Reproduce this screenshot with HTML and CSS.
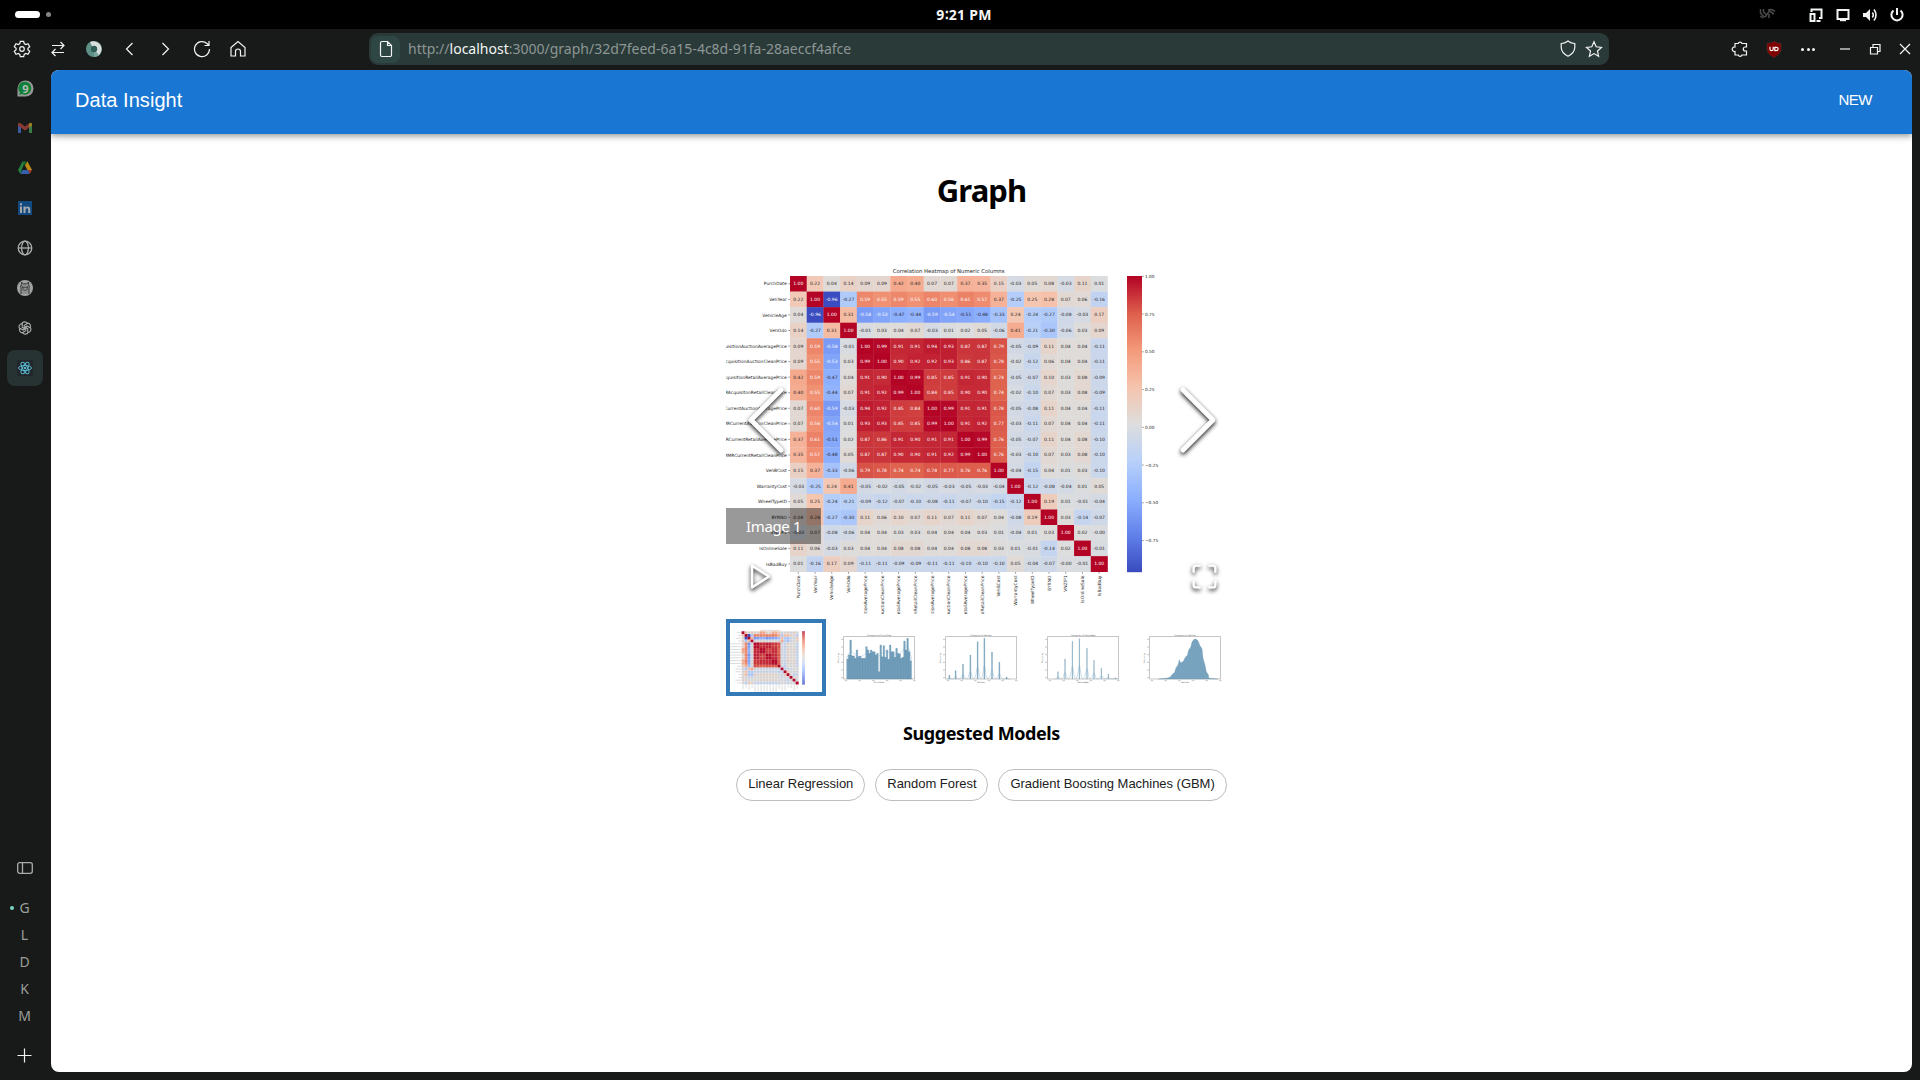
FILE: index.html
```html
<!DOCTYPE html>
<html lang="en">
<head>
<meta charset="utf-8">
<title>Data Insight</title>
<link rel="stylesheet" href="styles.css">
</head>
<body>
<div class="topbar">
  <div class="workspaces"><span class="ws-active"></span><span class="ws-dot"></span></div>
  <div class="clock">9∶21 PM</div>
  <div class="tray">
    <svg class="faint" width="17" height="17" viewBox="0 0 17 17"><path d="M1.500 3v4l4 4.500M4.500 3v3l3 3M6 11l6-8M9 4c3-1 5-.5 7 1.500M11 6q3 0 3.500 2.500M10 8v4M1 10l3 2" /></svg>
    <svg width="16" height="16" viewBox="0 0 16 16"><path d="M3.500 5V2.500h10V11H11"/><path d="M2.500 7h4v7h-4z"/><path d="M8.500 14h4"/></svg>
    <svg width="16" height="16" viewBox="0 0 16 16"><path d="M2.500 3h11v9h-11z"/><path d="M5 13.2h6" /></svg>
    <svg width="16" height="16" viewBox="0 0 16 16"><path class="solid" d="M1 6h3l4-4v12l-4-4H1z"/><path d="M10.300 5.500q2 2.500 0 5M12 2.500q4 5.500 0 11" stroke-width="1.600"/></svg>
    <svg width="16" height="16" viewBox="0 0 16 16"><path d="M8 1v7M4.500 3.500a5.600 5.600 0 1 0 7 0"/></svg>
  </div>
</div>

<div class="toolbar">
  <div class="tools">
    <span class="tool"><svg width="18" height="18" viewBox="0 0 18 18"><path d="M7.300 1.300h3.400l.5 2.300 1.500.9 2.300-.8 1.700 2.900-1.800 1.600v1.600l1.800 1.600-1.700 2.900-2.300-.8-1.500.9-.5 2.300H7.300l-.5-2.300-1.500-.9-2.300.8-1.700-2.900 1.800-1.600V8.200L1.300 6.600 3 3.700l2.300.8 1.500-.9z"/><circle cx="9" cy="9" r="2.300"/></svg></span>
    <span class="tool"><svg width="16" height="16" viewBox="0 0 16 16"><path d="M2 4.500h12M10.500 1l3.500 3.500L10.500 8M14 11.500H2M5.500 8L2 11.500 5.500 15"/></svg></span>
    <span class="tool"><svg class="plain" width="16" height="16" viewBox="0 0 16 16"><circle cx="8" cy="8" r="8" fill="#5f9087"/><path d="M4 1.100A8 8 0 0 1 12 14.900L9 10 6 5z" fill="#d9dfdd"/><path d="M8 8V16a8 8 0 0 0 5-2z" fill="#79a79e"/><circle cx="8" cy="8" r="3.200" fill="#2f5d57"/></svg></span>
    <span class="tool"><svg width="16" height="16" viewBox="0 0 16 16"><path d="M10.500 2l-6 6 6 6"/></svg></span>
    <span class="tool"><svg width="16" height="16" viewBox="0 0 16 16"><path d="M4.500 2l6 6-6 6"/></svg></span>
    <span class="tool"><svg width="18" height="18" viewBox="0 0 18 18"><path d="M16.500 9A7.500 7.500 0 1 1 14 3.500L16 5.500M16 1v4.500h-4.500"/></svg></span>
    <span class="tool"><svg width="18" height="18" viewBox="0 0 18 18"><path d="M2 7.500L9 1.500l7 6V16h-4.500v-4.500a2.500 2.500 0 0 0-5 0V16H2z"/></svg></span>
  </div>
  <div class="urlbar">
    <span class="site"><svg width="14" height="18" viewBox="0 0 14 18"><path d="M3 1.500h5.500l4 4V15a1.500 1.500 0 0 1-1.500 1.500H3A1.500 1.500 0 0 1 1.500 15V3A1.500 1.500 0 0 1 3 1.500zM8.500 1.500V5.500h4"/></svg></span>
    <span class="url">http://<b>localhost</b>:3000/graph/32d7feed-6a15-4c8d-91fa-28aeccf4afce</span>
    <span class="url-icons">
      <svg width="16" height="18" viewBox="0 0 16 18"><path d="M8 1q3 2.500 6.800 2.500V7.500Q14.500 13 8 16.300 1.500 13 1.200 7.500v-4Q5 3.500 8 1z"/></svg>
      <svg width="18" height="18" viewBox="0 0 18 18"><path d="M9 1.800l2.200 5 5.300.6-4 3.600 1.100 5.300L9 13.600l-4.600 2.700 1.100-5.300-4-3.600 5.300-.6z"/></svg>
    </span>
  </div>
  <div class="controls">
    <span class="ctl"><svg width="18" height="18" viewBox="0 0 18 18"><path d="M4 3.500h3.200a2 2 0 0 1 3.800 0h4.500V7h-1.200a2 2 0 0 0 0 4h1.200v4H11a2 2 0 0 1-3.800 0H4v-3.500a2.300 2.300 0 1 1 0-4.500z"/></svg></span>
    <span class="ctl"><svg class="plain" width="16" height="17" viewBox="0 0 16 17"><path d="M8 .5Q11 2.500 15 2.500v5.500q0 5-7 8.500Q1 13 1 8V2.500Q5 2.500 8 .5z" fill="#800000" stroke="#5d3030" stroke-width=".6"/><path d="M4 5.800v2.400q0 1.500 1.600 1.500t1.600-1.500V5.800M8.800 6.400v3.300h1.400q1.900-.1 1.900-1.800t-1.900-1.600z" fill="none" stroke="#fff" stroke-width="1.200"/></svg></span>
    <span class="ctl dots"><i></i><i></i><i></i></span>
    <span class="win"><svg width="12" height="12" viewBox="0 0 12 12"><path d="M1 6h10"/></svg></span>
    <span class="win"><svg width="12" height="12" viewBox="0 0 12 12"><path d="M1.500 4.500h7v6.500h-7zM4 4.500V1.500h7v7H8.500"/></svg></span>
    <span class="win"><svg width="12" height="12" viewBox="0 0 12 12"><path d="M1 1l10 10M11 1L1 11"/></svg></span>
  </div>
</div>

<div class="workarea">
  <nav class="sidebar">
    <span class="tab"><svg class="plain" width="17" height="17" viewBox="0 0 17 17"><path d="M.5 16.500V8.500a8 8 0 1 1 8 8z" fill="#999"/><path d="M2 15l1-2.500A6.500 6.500 0 1 1 5 14z" fill="#118038"/><text x="8.500" y="12.600" class="badge">9</text></svg></span>
    <span class="tab"><svg class="plain" width="16" height="16" viewBox="0 0 16 16"><path d="M1 4v9h3V7z" fill="#3a5a9c"/><path d="M12 7v6h3V4z" fill="#3c7a46"/><path d="M1 5V3.500Q2 2 4 3.500L8 6.500l4-3v4L8 10.500 1 5.500z" fill="#8a3932"/><path d="M12 3.500q2-1.500 3 0V5.500l-3 2z" fill="#a07f22"/></svg></span>
    <span class="tab"><svg class="plain" width="16" height="16" viewBox="0 0 16 16"><path d="M5.500 1.500h2.500l-2 5L3.300 14 1 10z" fill="#26803f"/><path d="M5.500 1.500h5L8 6z" fill="#1d6130"/><path d="M10.500 1.500L15 10h-4.500L8 5.500z" fill="#b98b15"/><path d="M3.300 14L5.500 10H11l1.700 4z" fill="#3561ad"/><path d="M11 10h4l-2.300 4z" fill="#a33a30"/></svg></span>
    <span class="tab"><svg class="plain" width="14" height="14" viewBox="0 0 14 14"><path d="M0 0h14v14H0z" fill="#124a80"/><path d="M2 5.500h2V12H2zM2 2.200h2v2H2zM5.500 5.500h2v1q2-2 4.200-.3.500.8.500 2V12h-2V8.700q-.1-1.500-1.300-1.400-1.300.1-1.400 1.500V12h-2z" fill="#a5a9ad"/></svg></span>
    <span class="tab"><svg class="grey" width="16" height="16" viewBox="0 0 16 16"><circle cx="8" cy="8" r="6.800"/><ellipse cx="8" cy="8" rx="3.400" ry="6.800"/><path d="M1.200 8h13.600"/></svg></span>
    <span class="tab"><svg class="plain" width="16" height="16" viewBox="0 0 16 16"><circle cx="8" cy="8" r="8" fill="#a2a2a2"/><path d="M4 14V8q-.8-2 .3-3.200L4.500 2l1.800 2q1.700-.6 3.400 0l1.800-2 .2 2.800Q12.800 6 12 8v6" fill="#8c8f8e" stroke="#363837" stroke-width="1"/><ellipse cx="8" cy="8.800" rx="2.200" ry="1.600" fill="none" stroke="#363837" stroke-width=".8"/><circle cx="5.700" cy="7" r=".7" fill="#222"/><circle cx="10.300" cy="7" r=".7" fill="#222"/></svg></span>
    <span class="tab"><svg class="grey" width="14" height="14" viewBox="0 0 14 14"><g stroke-width="1.100"><path id="knot" d="M3.700 3.200A3 3 0 0 1 9.300 2.500L6.200 4.300v3.200"/><use href="#knot" transform="rotate(60 7 7)"/><use href="#knot" transform="rotate(120 7 7)"/><use href="#knot" transform="rotate(180 7 7)"/><use href="#knot" transform="rotate(240 7 7)"/><use href="#knot" transform="rotate(300 7 7)"/></g></svg></span>
    <span class="tab current"><svg class="plain" width="16" height="16" viewBox="0 0 16 16"><rect width="16" height="16" rx="2" fill="#20262a"/><g fill="none" stroke="#58b7cf" stroke-width="1"><ellipse cx="8" cy="8" rx="6.500" ry="2.500"/><ellipse cx="8" cy="8" rx="6.500" ry="2.500" transform="rotate(60 8 8)"/><ellipse cx="8" cy="8" rx="6.500" ry="2.500" transform="rotate(120 8 8)"/></g><circle cx="8" cy="8" r="1.300" fill="#58b7cf"/></svg></span>
    <div class="sidebar-foot">
      <span class="panel-toggle"><svg class="grey" width="16" height="12" viewBox="0 0 16 12"><rect x=".7" y=".7" width="14.600" height="10.600" rx="2"/><path d="M5.500 1v10"/></svg></span>
      <span class="space space-on">G</span>
      <span class="space">L</span>
      <span class="space">D</span>
      <span class="space">K</span>
      <span class="space">M</span>
      <span class="add"><svg width="15" height="15" viewBox="0 0 15 15"><path d="M7.500 .5v14M.5 7.500h14"/></svg></span>
    </div>
  </nav>

  <div class="page">
    <header class="appbar"><span class="brand">Data Insight</span><span class="new">NEW</span></header>
    <main class="content">
      <h1>Graph</h1>
      <div class="stage">
        <svg id="heatmap" class="chart" width="511" height="384" viewBox="0 0 511 384"></svg>
        <svg class="nav nav-left" width="60" height="120" viewBox="6 0 12 24"><path d="M15 18l-6-6 6-6"/></svg>
        <svg class="nav nav-right" width="60" height="120" viewBox="6 0 12 24"><path d="M9 18l6-6-6-6"/></svg>
        <div class="caption">Image 1</div>
        <svg class="nav play" width="29" height="29" viewBox="0 0 24 24"><path d="M5 3l14 9-14 9z"/></svg>
        <svg class="nav full" width="29" height="29" viewBox="0 0 24 24"><path d="M8 3H5a2 2 0 0 0-2 2v3m18 0V5a2 2 0 0 0-2-2h-3m0 18h3a2 2 0 0 0 2-2v-3M3 16v3a2 2 0 0 0 2 2h3"/></svg>
      </div>
      <div class="thumbs">
        <div class="thumb selected"><svg id="thumb-heatmap" class="chart" width="92" height="69" viewBox="0 0 511 384"></svg></div>
        <div class="thumb"><svg id="hist-date" class="chart" width="92" height="69" viewBox="0 0 276 207"></svg></div>
        <div class="thumb"><svg id="hist-year" class="chart" width="92" height="69" viewBox="0 0 276 207"></svg></div>
        <div class="thumb"><svg id="hist-age" class="chart" width="92" height="69" viewBox="0 0 276 207"></svg></div>
        <div class="thumb"><svg id="hist-odo" class="chart" width="92" height="69" viewBox="0 0 276 207"></svg></div>
      </div>
      <h3>Suggested Models</h3>
      <div class="chips"><span class="chip">Linear Regression</span><span class="chip">Random Forest</span><span class="chip">Gradient Boosting Machines (GBM)</span></div>
    </main>
  </div>
</div>
<script src="charts.js"></script>
</body>
</html>
```
FILE: styles.css
```css
* { box-sizing: border-box; }
body { margin: 0; width: 1920px; height: 1080px; overflow: hidden; background: #181a19; font-family: "Noto Sans", sans-serif; display: flex; flex-direction: column; }
svg { display: block; fill: none; stroke: #f2f4f3; stroke-width: 1.2; flex: none; }
svg.plain, svg.chart { stroke: none; }
svg.grey { stroke: #aaacab; stroke-width: 1.3; }

.topbar { height: 29px; flex: none; background: #000; display: grid; grid-template-columns: 1fr auto 1fr; align-items: center; padding: 0 15px; }
.workspaces { display: flex; align-items: center; gap: 6px; }
.ws-active { width: 25px; height: 7px; border-radius: 4px; background: #fff; }
.ws-dot { width: 5px; height: 5px; border-radius: 50%; background: #858585; }
.clock { color: #f5f5f5; font-weight: 700; font-size: 14px; line-height: 28px; margin-left: 8px; letter-spacing: 0.25px; }
.tray { display: flex; justify-content: flex-end; align-items: center; gap: 11px; }
.tray svg { stroke-width: 2; }
.tray .solid { fill: #f2f4f3; stroke: none; }
.tray .faint { stroke: #4a4a4a; stroke-width: 1.5; margin-right: 21px; }

.toolbar { height: 41px; flex: none; display: flex; align-items: center; padding: 0 0 1px 4px; }
.tools, .controls { display: flex; align-items: center; }
.tool { width: 36px; height: 36px; display: grid; place-items: center; }
.urlbar { width: 1240px; height: 32px; margin-left: 113px; border-radius: 9px; background: #2a3a38; display: flex; align-items: center; padding: 0 6px 0 2px; }
.site { width: 29px; height: 27px; border-radius: 7px; background: #2e4744; display: grid; place-items: center; }
.url { margin-left: 8px; color: #8d9695; font-size: 14px; line-height: 20px; white-space: nowrap; padding-bottom: 1px; }
.url b { color: #f4f6f5; font-weight: 400; }
.url-icons { display: flex; gap: 9px; margin-left: auto; }
.controls { margin-left: auto; }
.ctl { width: 34px; height: 34px; display: grid; place-items: center; }
.ctl.dots { display: flex; align-items: center; justify-content: center; gap: 2.5px; margin-right: 5px; }
.dots i { width: 3px; height: 3px; border-radius: 50%; background: #f2f4f3; }
.win { width: 30px; height: 30px; display: grid; place-items: center; }

.workarea { flex: 1; min-height: 0; display: flex; padding: 0 8px 8px 0; }
.sidebar { width: 51px; flex: none; display: flex; flex-direction: column; gap: 4px; padding-left: 7px; }
.tab { width: 36px; height: 36px; flex: none; display: grid; place-items: center; border-radius: 8px; }
.tab.current { background: #263332; }
.badge { font: 700 11px "Noto Sans", sans-serif; fill: #b5bbb7; text-anchor: middle; }
.sidebar-foot { margin-top: auto; width: 36px; display: flex; flex-direction: column; align-items: center; color: #9b9d9c; font-size: 14px; }
.panel-toggle { height: 27px; margin-bottom: 13px; padding-bottom: 1px; display: grid; place-items: center; }
.space { position: relative; width: 36px; height: 27px; line-height: 26px; text-align: center; padding-right: 1px; }
.space-on::before { content: ""; position: absolute; left: 3px; top: 11px; width: 4px; height: 4px; border-radius: 50%; background: #78d5c4; }
.add { margin: 18px 1px 9px 0; }

.page { flex: 1; background: #fff; border-radius: 8px; overflow: hidden; display: flex; flex-direction: column; }
.appbar { height: 64px; flex: none; background: #1976d2; color: #fff; display: flex; align-items: center; justify-content: space-between; padding: 0 40px 4px 24px; font-family: "Liberation Sans", sans-serif; box-shadow: 0 2px 4px -1px rgba(0,0,0,.2), 0 4px 5px rgba(0,0,0,.14), 0 1px 10px rgba(0,0,0,.12); }
.brand { font-size: 20px; letter-spacing: .05px; }
.new { font-size: 15px; letter-spacing: -.5px; padding-bottom: 1px; }
.content { display: flex; flex-direction: column; align-items: center; }
h1 { margin: 34px 0 0; font-size: 31px; font-weight: 700; letter-spacing: -.9px; line-height: 44px; height: 62px; color: #000; }
.stage { position: relative; width: 511px; height: 384px; }
.nav { position: absolute; stroke: #fff; stroke-width: 1; stroke-linecap: round; stroke-linejoin: round; filter: drop-shadow(0 2px 2px #1a1a1a); }
.nav-left { left: 10px; top: 130px; }
.nav-right { right: 9px; top: 130px; }
.play { left: 20px; bottom: 23px; stroke-width: 2; }
.full { right: 18px; bottom: 23px; stroke-width: 2; }
.caption { position: absolute; left: 0; bottom: 70px; width: 95px; height: 36px; line-height: 36px; padding-left: 20px; background: rgba(0,0,0,.4); color: #fff; font-size: 15px; letter-spacing: -.35px; }
.thumbs { display: flex; gap: 2px; margin-top: 5px; width: 511px; }
.thumb { width: 100px; height: 77px; border: 4px solid transparent; }
.selected { border-color: #337ab7; }
h3 { margin: 24px 0 0; font-size: 18px; font-weight: 700; letter-spacing: -.42px; line-height: 26px; color: #000; }
.chips { display: flex; gap: 10px; margin-top: 23px; }
.chip { height: 32px; line-height: 28px; border: 1px solid #bdbdbd; border-radius: 16px; padding: 0 11px; font-family: "Liberation Sans", sans-serif; font-size: 13px; letter-spacing: -.03px; color: #212121; }

.chart text { font-family: "DejaVu Sans", sans-serif; fill: #262626; }
.chart .cell { font-size: 4.5px; text-anchor: middle; }
.chart .cell.light { fill: #fff; }
.chart .label { font-size: 4.45px; text-anchor: end; }
.chart .scale { font-size: 4.3px; }
.chart .title { font-size: 5.35px; text-anchor: middle; }
.chart .tick { stroke: #333; stroke-width: .5; }
.chart .axis { fill: none; stroke: #aaa; stroke-width: 2; }
.chart .bars { fill: #78a3bf; stroke: #5c8ba8; stroke-width: .8; }
.chart .density { fill: none; stroke: #7eabc8; stroke-width: 1.2; }
.chart .small { font-size: 6px; fill: #555; text-anchor: middle; }
```
FILE: charts.js
```js
const columns = ["PurchDate", "VehYear", "VehicleAge", "VehOdo",
  "MMRAcquisitionAuctionAveragePrice", "MMRAcquisitionAuctionCleanPrice",
  "MMRAcquisitionRetailAveragePrice", "MMRAcquisitonRetailCleanPrice",
  "MMRCurrentAuctionAveragePrice", "MMRCurrentAuctionCleanPrice",
  "MMRCurrentRetailAveragePrice", "MMRCurrentRetailCleanPrice",
  "VehBCost", "WarrantyCost", "WheelTypeID", "BYRNO", "VNZIP1", "IsOnlineSale", "IsBadBuy"];

// Upper triangle of the correlation matrix, one row per column, diagonal first.
const upper = [
  [1, .22, .04, .14, .09, .09, .42, .40, .07, .07, .37, .35, .15, -.03, .05, .08, -.03, .11, .01],
  [1, -.96, -.27, .59, .55, .59, .55, .60, .56, .61, .57, .37, -.25, .25, .28, .07, .06, -.16],
  [1, .31, -.58, -.53, -.47, -.44, -.59, -.54, -.51, -.48, -.33, .24, -.24, -.27, -.08, -.03, .17],
  [1, -.01, .03, .04, .07, -.03, .01, .02, .05, -.06, .41, -.21, -.30, -.06, .03, .09],
  [1, .99, .91, .91, .94, .93, .87, .87, .79, -.05, -.09, .11, .04, .04, -.11],
  [1, .90, .92, .92, .93, .86, .87, .78, -.02, -.12, .06, .04, .04, -.11],
  [1, .99, .85, .85, .91, .90, .74, -.05, -.07, .10, .03, .08, -.09],
  [1, .84, .85, .90, .90, .74, -.02, -.10, .07, .03, .08, -.09],
  [1, .99, .91, .91, .78, -.05, -.08, .11, .04, .04, -.11],
  [1, .91, .92, .77, -.03, -.11, .07, .04, .04, -.11],
  [1, .99, .76, -.05, -.07, .11, .04, .08, -.10],
  [1, .76, -.03, -.10, .07, .03, .08, -.10],
  [1, -.04, -.15, .04, .01, .03, -.10],
  [1, -.12, -.08, -.04, .01, .05],
  [1, .19, .01, -.01, -.04],
  [1, .03, -.14, -.07],
  [1, .02, -.001],
  [1, -.01],
  [1]
];

// Diverging blue-grey-red colour map, evenly spaced stops.
const stops = [[59, 76, 192], [98, 130, 234], [141, 176, 254], [184, 208, 249], [221, 221, 221],
  [245, 196, 173], [244, 154, 123], [222, 96, 77], [180, 4, 38]];
function colour(v) {
  const t = Math.max(0, Math.min(1, (v + .96) / 1.96)) * 8;
  const i = Math.min(7, Math.floor(t));
  return "rgb(" + stops[i].map((c, k) => Math.round(c + (stops[i + 1][k] - c) * (t - i))).join() + ")";
}

function heatmap(withText) {
  const x0 = 64, y0 = 46, w = 317.5 / 19, h = 295.7 / 19;
  let out = "";
  for (let r = 0; r < 19; r++) {
    for (let c = 0; c < 19; c++) {
      const v = r <= c ? upper[r][c - r] : upper[c][r - c];
      out += `<rect x="${x0 + c * w}" y="${y0 + r * h}" width="${w + .3}" height="${h + .3}" fill="${colour(v)}"/>`;
      if (withText) {
        const light = v > .5 || v < -.52 ? " light" : "";
        out += `<text class="cell${light}" x="${x0 + (c + .5) * w}" y="${y0 + (r + .5) * h + 1.5}">${v.toFixed(2)}</text>`;
      } else {
        out += `<rect x="${x0 + c * w + 4}" y="${y0 + r * h + 6}" width="9" height="3" fill="#666" opacity=".2"/>`;
      }
    }
    const ly = y0 + (r + .5) * h, lx = x0 + (r + .5) * w;
    out += `<path class="tick" d="M62.300 ${ly}H64M${lx} 342v1.700"/>`;
    if (withText) {
      out += `<text class="label" x="60.800" y="${ly + 1.6}">${columns[r]}</text>`;
      out += `<text class="label" transform="translate(${lx + 1.6} 345.500) rotate(-90)">${columns[r]}</text>`;
    } else {
      const len = Math.min(columns[r].length * 2.6, 60);
      out += `<path d="M${60 - len} ${ly}H60" stroke="#999" stroke-width="2"/><path d="M${lx} 346v${Math.min(len, 37)}" stroke="#999" stroke-width="2"/>`;
    }
  }
  for (let i = 0; i < 148; i++) {
    out += `<rect x="401" y="${46 + i * 2}" width="15" height="2.200" fill="${colour(1 - i * 1.96 / 147)}"/>`;
  }
  for (let v = 1; v >= -.75; v -= .25) {
    const y = 46.3 + (1 - v) * 151;
    out += `<path class="tick" d="M416 ${y}h1.700"/>`;
    if (withText) out += `<text class="scale" x="419" y="${y + 1.5}">${v.toFixed(2).replace("-", "−")}</text>`;
  }
  out += withText
    ? `<text class="title" x="222.700" y="43.300">Correlation Heatmap of Numeric Columns</text>`
    : `<path d="M167 41h111" stroke="#999" stroke-width="2"/>`;
  return out;
}

function frame(name) {
  let out = `<rect class="axis" x="35" y="41" width="213" height="127"/><text class="small" x="141" y="38">Histogram of ${name}</text><text class="small" x="141" y="180">${name}</text><text class="small" transform="translate(20 105) rotate(-90)">Frequency</text>`;
  for (let i = 0; i < 6; i++) {
    out += `<path d="M${38 + i * 41} 173h8M27 ${49 + i * 23}h6" stroke="#aaa" stroke-width="2"/>`;
  }
  return out;
}
function spikes(name, xs, tops, width) {
  let bars = "", line = "M" + (xs[0] - 8) + " 168";
  xs.forEach((x, i) => {
    bars += `M${x - width / 2} 168V${tops[i]}h${width}V168z`;
    const p = 168 - (168 - tops[i]) * .33;
    line += `C${x - 4} 168 ${x - 3} ${p} ${x} ${p}S${x + 4} 168 ${x + 10} 167`;
  });
  return frame(name) + `<path class="bars" d="${bars}"/><path class="density" d="${line}"/>`;
}

document.getElementById("heatmap").innerHTML = heatmap(true);
document.getElementById("thumb-heatmap").innerHTML = heatmap(false);

const dateTops = [108, 96, 51, 98, 99, 106, 81, 101, 99, 106, 106, 106, 71, 81, 91, 81, 86, 86, 96, 91, 146, 66, 101, 68, 103,
  81, 109, 66, 86, 86, 103, 76, 91, 93, 106, 103, 54, 81, 46, 86, 113];
let dateBars = "";
dateTops.forEach((y, i) => { dateBars += `M${44 + i * 4.75} 168V${y}h4.750V168z`; });
document.getElementById("hist-date").innerHTML = frame("PurchDate") + `<path class="bars" d="${dateBars}"/><path class="density" d="M44 107L50 92 57 84 65 90 72 98 85 104 100 92 110 85 125 88 140 100 155 87 170 88 190 94 205 92 215 78 225 67 232 80 239 110"/>`;
document.getElementById("hist-year").innerHTML = spikes("VehYear", [46, 65, 87, 109, 131, 151, 174, 196, 218], [157, 143, 124, 96, 56, 46, 87, 118, 162], 2.6);
document.getElementById("hist-age").innerHTML = spikes("VehicleAge", [66, 87, 109, 130, 153, 174, 196, 217, 238], [146, 108, 55, 47, 76, 112, 136, 153, 164], 1.4);
document.getElementById("hist-odo").innerHTML = frame("VehOdo") + `<path class="bars" d="M61 168L85 166 96 163 104 153 110 148 114 134 120 126 124 110 128 120 136 115 142 103 148 97 152 81 158 73 162 57 168 49 174 48 180 53 186 68 192 77 195 105 201 126 205 146 211 155 213 166 240 168z"/>`;
```
